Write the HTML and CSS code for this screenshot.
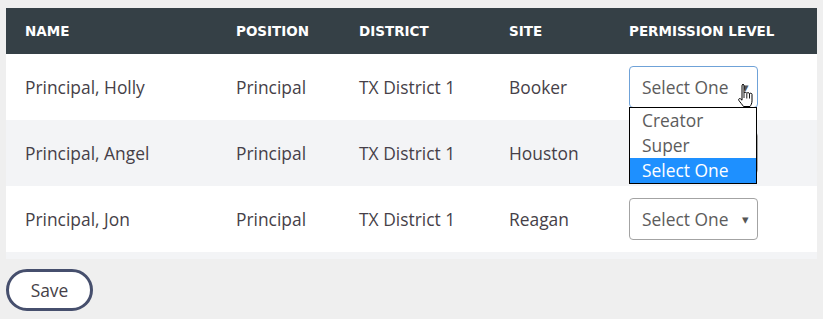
FILE: index.html
```html
<!DOCTYPE html>
<html lang="en">
<head>
  <meta charset="UTF-8" />
  <title>Permissions</title>
  <link rel="stylesheet" href="styles.css">
</head>
<body>
  <div class="table-wrap">
    <table class="users">
      <thead>
        <tr>
          <th class="col-name">Name</th>
          <th class="col-pos">Position</th>
          <th class="col-dist">District</th>
          <th class="col-site">Site</th>
          <th class="col-perm">Permission Level</th>
        </tr>
      </thead>
      <tbody>
        <tr>
          <td>Principal, Holly</td>
          <td>Principal</td>
          <td>TX District 1</td>
          <td>Booker</td>
          <td>
            <div class="picker">
              <div class="select focused"><span>Select One</span> <span class="caret">&#9662;</span></div>
              <ul class="menu">
                <li>Creator</li>
                <li>Super</li>
                <li class="active">Select One</li>
              </ul>
              <svg class="hand" width="18" height="24" viewBox="0 0 18 24">
                <path d="M5.5 1.5c1 0 1.5.6 1.5 1.5v7c.3-.9 2.6-.9 2.8.3.3-.9 2.5-.9 2.7.4.4-.8 2.5-.7 2.5.7v6.5c0 2.5-1.2 4.6-2 5.6H6.5c-1-1.6-3.5-4.4-4.600-6-.8-1.2.4-2.6 1.7-1.6l1.4 1.3V3c0-.9.5-1.5 1.5-1.5z" fill="#fff" stroke="#000" stroke-width="1"/>
                <path d="M9.8 10.5v5M12.5 11v4.5M7 10v5" stroke="#000" stroke-width="0.9"/>
              </svg>
            </div>
          </td>
        </tr>
        <tr>
          <td>Principal, Angel</td>
          <td>Principal</td>
          <td>TX District 1</td>
          <td>Houston</td>
          <td><div class="select covered"><span>Select One</span> <span class="caret">&#9662;</span></div></td>
        </tr>
        <tr>
          <td>Principal, Jon</td>
          <td>Principal</td>
          <td>TX District 1</td>
          <td>Reagan</td>
          <td><div class="select"><span>Select One</span> <span class="caret">&#9662;</span></div></td>
        </tr>
      </tbody>
    </table>
  </div>
  <button class="save">Save</button>
</body>
</html>
```

FILE: styles.css
```css
* {
  box-sizing: border-box;
}
body {
  margin: 0;
  padding: 8px 6px;
  background: #efefef;
  font-family: 'Open Sans', 'Liberation Sans', sans-serif;
  color: #463f48;
}
.table-wrap {
  background: #f3f4f6;
  padding-bottom: 7px;
}
.users {
  width: 100%;
  border-collapse: collapse;
  table-layout: fixed;
}
.users th {
  background: #354046;
  color: #fff;
  font-family: 'DejaVu Sans', sans-serif;
  font-weight: bold;
  font-size: 13.5px;
  text-transform: uppercase;
  text-align: left;
  height: 46px;
  padding: 0 0 0 19px;
}
.col-name { width: 211px; }
.col-pos { width: 123px; }
.col-dist { width: 150px; }
.col-site { width: 120px; }
.users td {
  height: 66px;
  padding: 0 0 0 19px;
  font-size: 17.4px;
  vertical-align: middle;
}
.users tbody tr:nth-child(odd) {
  background: #fff;
}
.users tbody tr:nth-child(even) {
  background: #f3f4f6;
}
.picker {
  position: relative;
}
.select {
  width: 129px;
  height: 42px;
  border: 1px solid #a3a3a3;
  border-radius: 4px;
  background: #fff;
  color: #5c5c5c;
  font-size: 17.4px;
  display: flex;
  align-items: center;
  justify-content: space-between;
  padding: 0 8px 0 12px;
}
.select.focused {
  border-color: #6fa2d8;
}
.select.covered span {
  visibility: hidden;
}
.caret {
  font-size: 13px;
  color: #555;
}
.menu {
  position: absolute;
  top: 41px;
  left: 0;
  width: 128px;
  margin: 0;
  padding: 0;
  list-style: none;
  background: #fff;
  border: 1px solid #000;
  z-index: 5;
}
.menu li {
  height: 25px;
  line-height: 25px;
  padding-left: 12px;
  font-size: 17.4px;
  color: #5c5c5c;
}
.menu li.active {
  background: #1e90ff;
  color: #fff;
}
.hand {
  position: absolute;
  top: 17px;
  left: 108px;
  z-index: 6;
}
.save {
  margin-top: 10px;
  width: 87px;
  height: 42px;
  border: 3px solid #464f6d;
  border-radius: 21px;
  background: #fff;
  font-family: 'Open Sans', sans-serif;
  font-size: 17.4px;
  color: #463f48;
  padding: 0;
}
```
